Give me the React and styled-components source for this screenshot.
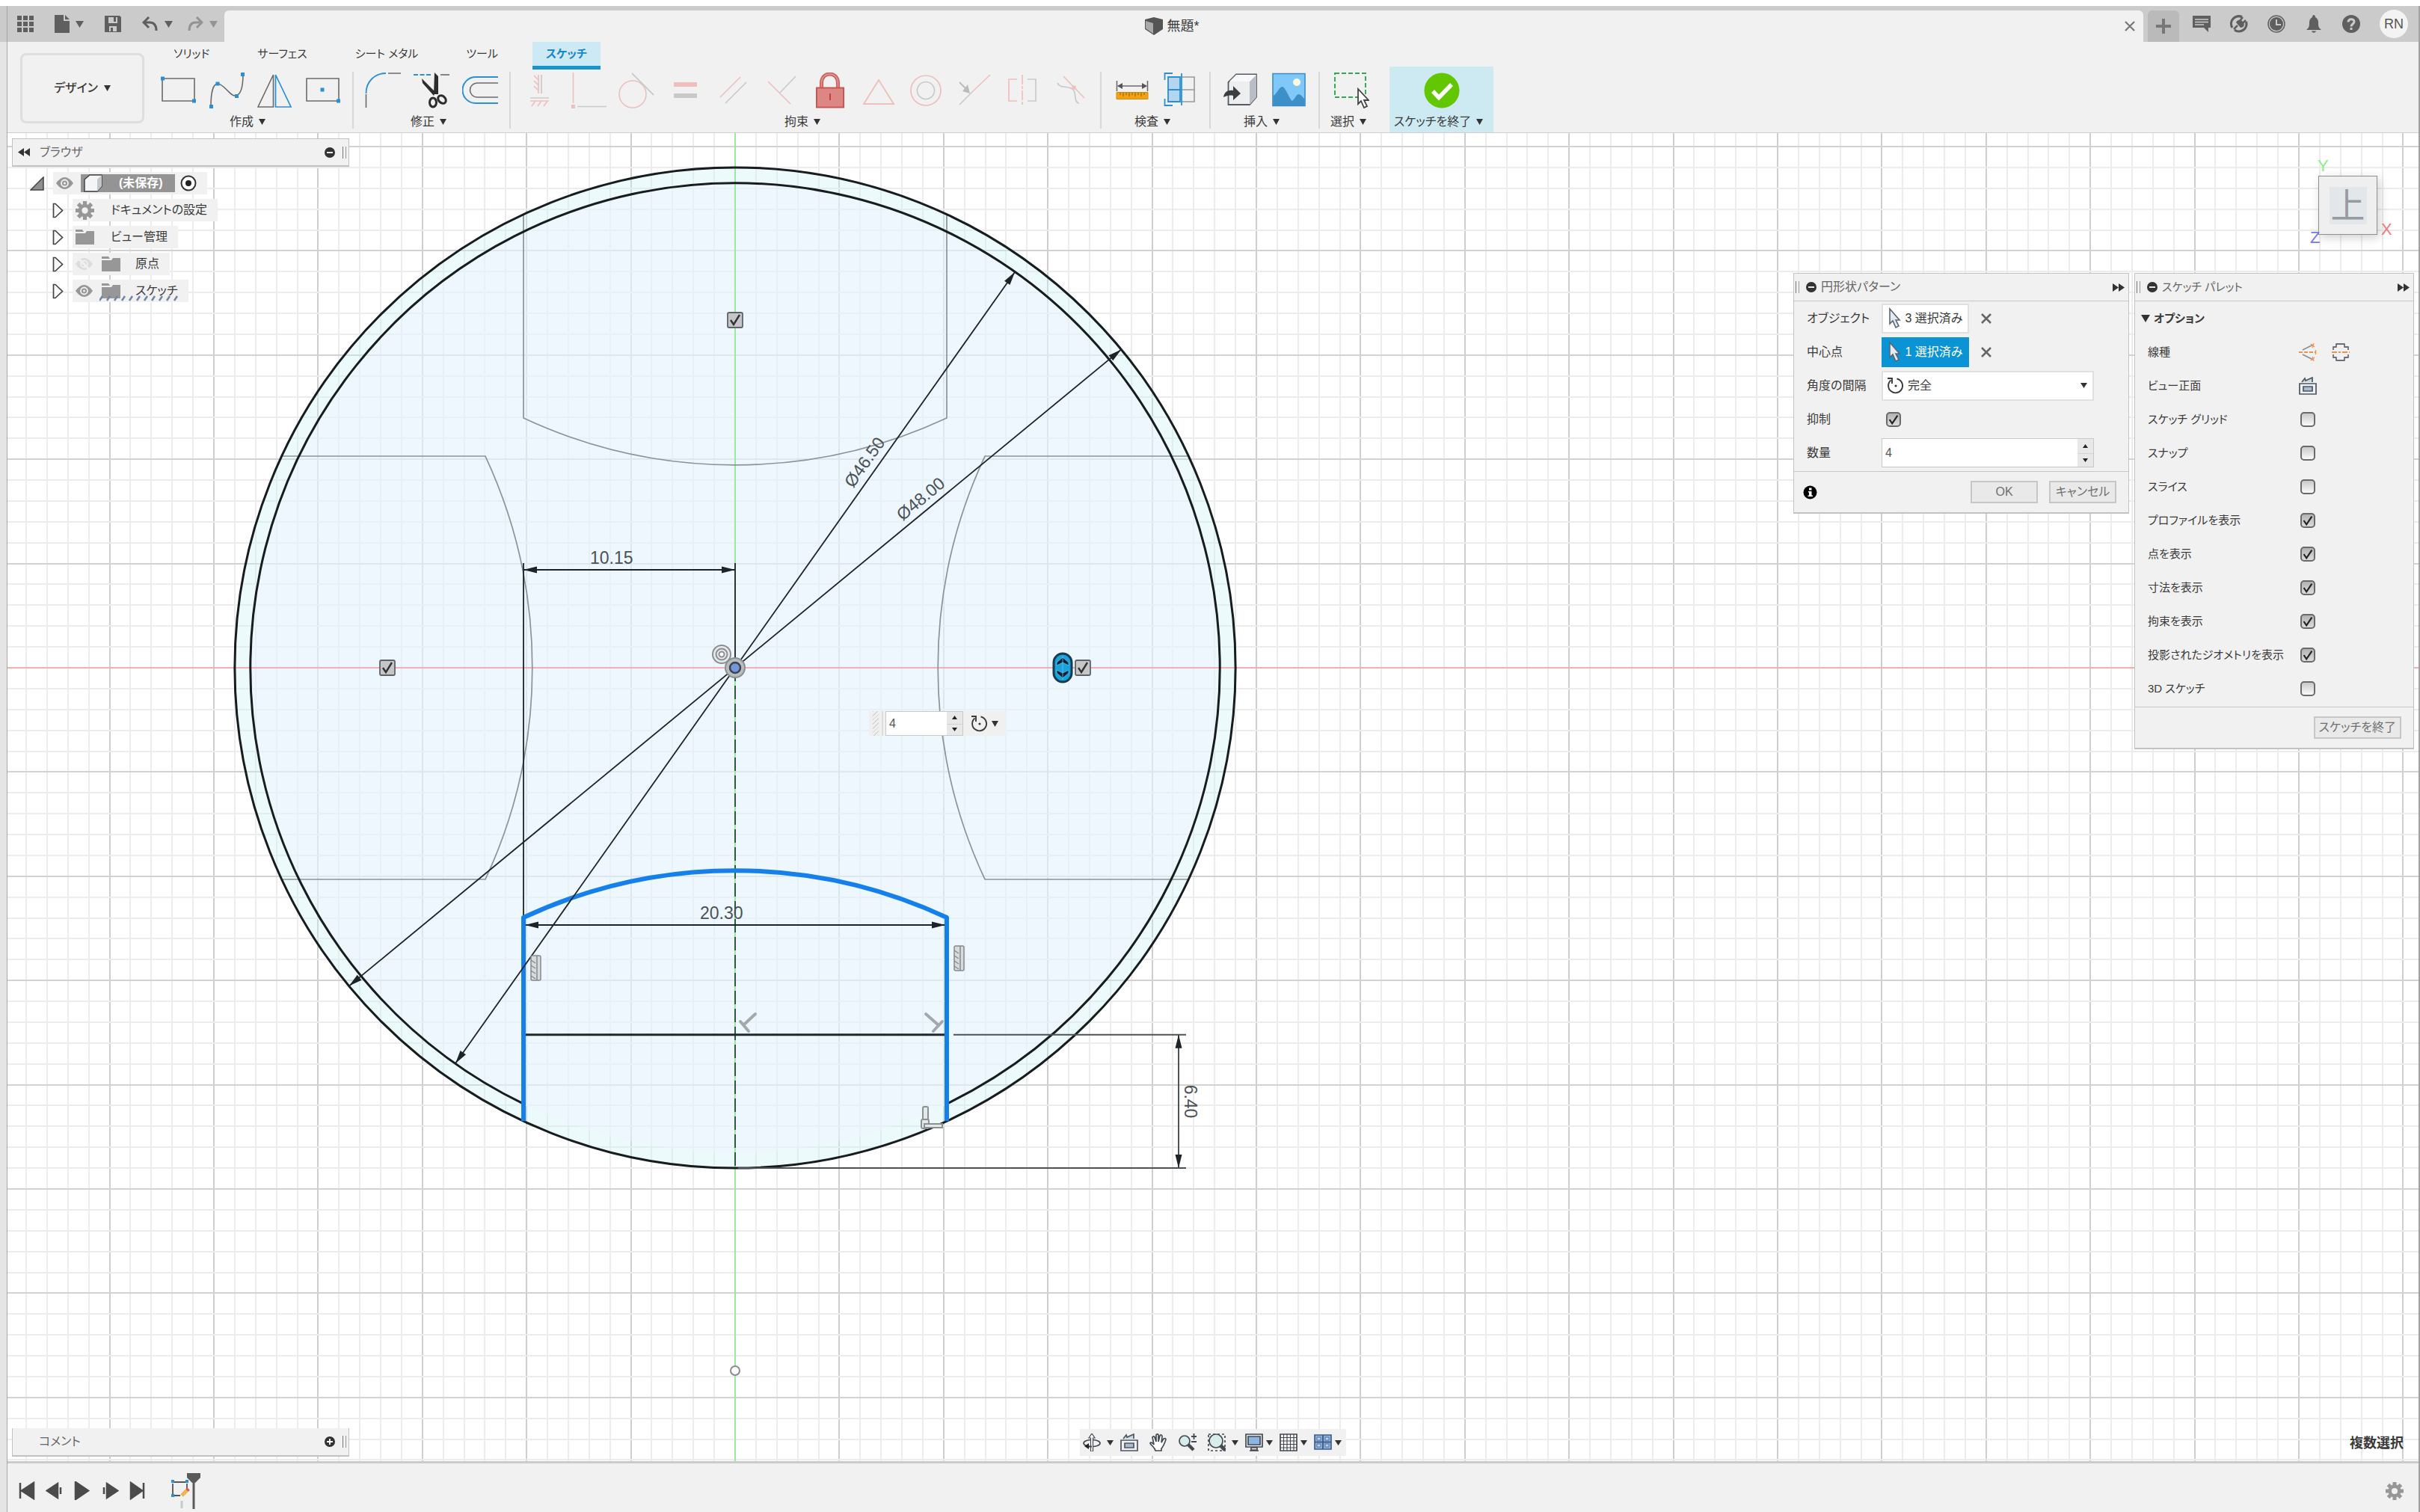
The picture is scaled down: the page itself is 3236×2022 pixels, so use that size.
import React, { useState } from "react";
import styled, { createGlobalStyle, css } from "styled-components";

const BLUE = "#2a8fd6";
const GREY = "#6b6b6b";
const PINK = "#eebfbd";
const PALE = "#c9caca";
const INK = "#3a3a3a";

const Global = createGlobalStyle`
  * { box-sizing: border-box; }
  body {
    margin: 0;
    background: #fff;
    color: #3a3a3a;
    font-family: "Liberation Sans", "Noto Sans CJK JP", sans-serif;
    font-size: 16px;
    line-height: 20px;
    font-feature-settings: "palt";
  }
  button, input, select { font: inherit; font-feature-settings: inherit; color: inherit; }
  button { background: none; border: 0; padding: 0; cursor: pointer; }
  svg { display: block; flex: none; }
`;

/* ---------- frame ---------- */

const Page = styled.div`
  min-height: 100vh;
  display: flex;
  flex-direction: column;
  padding-top: 8px;
`;

const Frame = styled.div`
  flex: 1;
  display: flex;
  padding-left: 9px;
  background: linear-gradient(#cbcbcb 48px, #e5e5e5 48px);
`;

const Window = styled.div`
  flex: 1;
  min-width: 0;
  display: flex;
  flex-direction: column;
  background: #f1f1f1;
  border-left: 1px solid #a6a6a6;
  border-right: 2px solid #a2a2a2;
`;

const TitleBar = styled.header`
  display: flex;
  height: 48px;
  background: #cbcbcb;
`;

const QuickAccess = styled.div`
  display: flex;
  align-items: center;
  gap: 28px;
  width: 290px;
  padding-left: 13px;
`;

const History = styled.div`
  display: flex;
  gap: 19px;
`;

const QuickButton = styled.button`
  display: flex;
  align-items: center;
  gap: 8px;
  color: ${(p) => (p.$dim ? "#939393" : "#5f5f5f")};
`;

const DocTab = styled.div`
  flex: 1;
  display: flex;
  align-items: center;
  margin-top: 6px;
  padding: 0 4px 0 0;
  background: #f1f1f1;
  border-radius: 6px 6px 0 0;
`;

const DocTitle = styled.div`
  flex: 1;
  display: flex;
  justify-content: center;
  align-items: center;
  gap: 4px;
  font-size: 18px;
`;

const CloseTab = styled.button`
  width: 28px;
  display: flex;
  justify-content: center;
`;

const AddTab = styled.button`
  width: 42px;
  margin: 6px 18px 0 6px;
  display: flex;
  align-items: center;
  justify-content: center;
  background: #bababa;
  border-radius: 6px 6px 0 0;
`;

const Account = styled.div`
  display: flex;
  align-items: center;
  gap: 26px;
  padding-right: 14px;
`;

const Avatar = styled.button`
  width: 38px;
  height: 38px;
  border-radius: 50%;
  background: #f3f3f3;
  font-size: 18px;
  color: #555;
`;

/* ---------- ribbon ---------- */

const Ribbon = styled.div`
  display: flex;
  height: 122px;
  border-bottom: 1px solid #cfcfcf;
`;

const Workspace = styled.button`
  display: flex;
  align-items: center;
  justify-content: center;
  gap: 8px;
  width: 166px;
  height: 94px;
  margin: 15px 5px 0 17px;
  border: 3px solid #dedede;
  border-radius: 8px;
  font-weight: 500;
`;

const RibbonMain = styled.div`
  flex: 1;
  display: flex;
  flex-direction: column;
`;

const Tabs = styled.div`
  display: flex;
  height: 33px;
  gap: 28px;
  padding-left: 16px;
`;

const Tab = styled.button`
  height: 37px;
  padding: 0 18px;
  font-size: 15px;
  border-bottom: 5px solid transparent;
  ${(p) =>
    p.$active &&
    css`
      background: #cdeaf4;
      border-bottom-color: #1c93c9;
      color: #1787c8;
      font-weight: 700;
    `}
`;

const Groups = styled.div`
  display: flex;
  flex: 1;
`;

const Group = styled.section`
  width: ${(p) => p.$width}px;
  padding: 8px 8px 0;
  position: relative;
  ${(p) =>
    p.$divided &&
    css`
      &::after {
        content: "";
        position: absolute;
        right: -1px;
        top: 7px;
        width: 2px;
        height: 76px;
        background: #d8d8d8;
      }
    `}
`;

const IconRow = styled.div`
  display: grid;
  grid-auto-flow: column;
  grid-auto-columns: 1fr;
  justify-items: center;
`;

const ToolButton = styled.button`
  width: 48px;
  height: 48px;
`;

const GroupLabel = styled.button`
  display: flex;
  align-items: center;
  justify-content: center;
  gap: 7px;
  width: 100%;
  height: 32px;
  padding: 4px 8px 0 0;
  white-space: nowrap;
`;

const FinishGroup = styled.section`
  width: 139px;
  margin-left: 8px;
  padding-top: 8px;
  background: #cdeaf3;
`;

/* ---------- canvas ---------- */

const Canvas = styled.main`
  flex: 1;
  position: relative;
  overflow: hidden;
  background: #fff;
`;

const Drawing = styled.svg`
  position: absolute;
  inset: 0;
  width: 100%;
  height: 100%;
  text { font-family: "Liberation Sans", Arial, sans-serif; font-size: 23px; fill: #4a5256; }
`;

const panelBox = css`
  position: absolute;
  background: #f1f1f1;
  border: 1px solid #c2c2c2;
  border-bottom-width: 2px;
`;

const SideBar = styled.div`
  ${panelBox}
  left: 6px;
  width: 451px;
  height: 38px;
  display: flex;
  align-items: center;
  padding-right: 3px;
  color: #666;
  ${(p) => (p.$bottom ? "bottom: 6px; border-top: 0;" : "top: 7px;")}
`;

const SideTitle = styled.span`
  flex: 1;
  display: flex;
  align-items: center;
  gap: 13px;
  padding-left: ${(p) => p.$indent}px;
`;

const Bars = styled.span`
  width: 5px;
  height: 16px;
  margin: ${(p) => p.$margin || "0 0 0 9px"};
  border-left: 1px solid #777;
  border-right: 1px solid #999;
`;

const Tree = styled.ul`
  position: absolute;
  top: 52px;
  left: 30px;
  margin: 0;
  padding: 0;
  list-style: none;
  display: grid;
  gap: 6px;
`;

const TreeRow = styled.li`
  display: flex;
  align-items: center;
  gap: 12px;
  height: 30px;
  padding-left: ${(p) => (p.$child ? 30 : 0)}px;
`;

const TreeItem = styled.button`
  position: relative;
  display: flex;
  align-items: center;
  gap: 12px;
  height: 30px;
  padding: 0 14px 0 4px;
  background: #f1f1f1;
`;

const TreeName = styled.span`
  padding-left: ${(p) => p.$pad || 0}px;
`;

const Selected = styled.span`
  display: flex;
  align-items: center;
  gap: 22px;
  height: 24px;
  padding: 0 16px 0 4px;
  margin: 0 -5px 0 -2px;
  background: #949494;
  color: #fff;
  font-weight: 700;
`;

const Hatch = styled.svg`
  position: absolute;
  left: 36px;
  bottom: 1px;
`;

const ViewCube = styled.div`
  position: absolute;
  top: 57px;
  right: 55px;
  width: 79px;
  height: 79px;
  display: grid;
  place-items: center;
  background: #efefef;
  border: 1px solid #8f8f8f;
  box-shadow: 3px 4px 12px rgba(0, 0, 0, 0.18);
`;

const CubeFace = styled.button`
  width: 50px;
  height: 50px;
  background: #e4e7ea;
  color: #969ba1;
  font-size: 46px;
  line-height: 50px;
`;

const Axis = styled.span`
  position: absolute;
  font-size: 22px;
  color: ${(p) => p.$color};
  left: ${(p) => p.$x}px;
  top: ${(p) => p.$y}px;
`;

const Panel = styled.section`
  ${panelBox}
  top: 187px;
  right: ${(p) => p.$right}px;
  width: ${(p) => p.$width}px;
`;

const PanelHead = styled.header`
  display: flex;
  align-items: center;
  height: 37px;
  border-bottom: 1px solid #c6c6c6;
  color: #666;
  padding: 0 5px 0 2px;
`;

const PanelTitle = styled.h2`
  flex: 1;
  margin: 0 0 0 5px;
  font-size: ${(p) => p.$size || 16}px;
  font-weight: 400;
`;

const Row = styled.div`
  display: grid;
  grid-template-columns: ${(p) => p.$cols};
  align-items: center;
  height: 45px;
  padding-left: 17px;
  font-size: ${(p) => (p.$small ? 15 : 16)}px;
  white-space: nowrap;
`;

const Pick = styled.button`
  display: flex;
  align-items: center;
  justify-content: center;
  gap: 6px;
  width: 117px;
  height: 40px;
  border: 2px solid ${(p) => (p.$on ? "#0a94d6" : "#e0e0e0")};
  background: ${(p) => (p.$on ? "#0a94d6" : "#fff")};
  color: ${(p) => (p.$on ? "#fff" : "#3a3a3a")};
`;

const Clear = styled.button`
  margin-left: 16px;
  width: 16px;
`;

const SelectBox = styled.div`
  display: grid;
  width: 284px;
  height: 40px;
  align-items: center;
  border: 2px solid #e0e0e0;
  background: #fff;
  & > * { grid-area: 1 / 1; }
  & > svg { pointer-events: none; margin-left: 5px; }
  & > svg:last-child { justify-self: end; margin-right: 7px; }
`;

const Select = styled.select`
  appearance: none;
  width: 100%;
  height: 100%;
  border: 0;
  padding-left: 33px;
  background: transparent;
`;

const Stepper = styled.div`
  display: flex;
  width: ${(p) => p.$width}px;
  height: ${(p) => p.$height}px;
  border: 1px solid #c9c9c9;
  background: #fff;
`;

const NumberInput = styled.input`
  flex: 1;
  min-width: 0;
  border: 0;
  padding: 0 4px;
  background: #fff;
  color: #555;
`;

const Steps = styled.div`
  display: grid;
  grid-template-rows: 1fr 1fr;
  width: 21px;
  background: #e8e8e8;
  button { display: grid; place-items: center; }
  button + button { border-top: 1px solid #d2d2d2; }
`;

const checkMark =
  "url(\"data:image/svg+xml,%3Csvg xmlns='http://www.w3.org/2000/svg' viewBox='0 0 20 20'%3E%3Cpath d='M4 10l4 6L16 4' fill='none' stroke='%23222' stroke-width='2.4'/%3E%3C/svg%3E\")";

const Check = styled.input.attrs({ type: "checkbox" })`
  appearance: none;
  width: 20px;
  height: 20px;
  margin: 0;
  border: 2px solid #6a6a6a;
  border-radius: 5px;
  background: linear-gradient(#c9c9c9, #fafafa);
  &:checked { background: ${checkMark} center / 18px no-repeat, linear-gradient(#b2b2b2, #dcdcdc); }
`;

const PanelFoot = styled.footer`
  display: flex;
  align-items: center;
  justify-content: flex-end;
  gap: 15px;
  height: 55px;
  margin-top: 2px;
  padding: 0 16px 0 12px;
  border-top: 1px solid #c6c6c6;
  & > svg { margin-right: auto; }
`;

const PushButton = styled.button`
  min-width: 90px;
  height: 30px;
  padding: 0 5px;
  border: 2px solid #c6c6c6;
  background: #e9e9e9;
  color: #6f6f6f;
  font-size: 16px;
  white-space: nowrap;
`;

const Section = styled.button`
  display: flex;
  align-items: center;
  gap: 5px;
  height: 45px;
  padding-left: 8px;
  font-size: 15px;
  font-weight: 700;
`;

const IconPair = styled.div`
  display: flex;
  gap: 20px;
`;

const MiniEditor = styled.div`
  position: absolute;
  left: 1152px;
  top: 773px;
  display: flex;
  align-items: center;
  width: 183px;
  height: 33px;
  background: #f0f0f0;
`;

const Grip = styled.span`
  width: 8px;
  height: 100%;
  margin: 0 4px 0 5px;
  background: repeating-linear-gradient(135deg, #d4d4d4 0 1px, transparent 1px 4px);
`;

const Rule = styled.span`
  width: 2px;
  height: 100%;
  margin-right: 3px;
  background: #dcdcdc;
`;

const OrbitMode = styled.button`
  display: flex;
  align-items: center;
  gap: 5px;
  margin-left: 10px;
`;

const NavBar = styled.nav`
  position: absolute;
  left: 1434px;
  bottom: 7px;
  display: flex;
  align-items: center;
  gap: 15px;
  height: 36px;
  padding: 0 12px 0 4px;
  background: #f1f1f1;
`;

const NavButton = styled.button`
  display: flex;
  align-items: center;
  gap: ${(p) => (p.$menu === "wide" ? 8 : 4)}px;
  margin-right: ${(p) => (p.$menu ? -6 : 0)}px;
`;

const Status = styled.div`
  position: absolute;
  right: 20px;
  bottom: 14px;
  font-size: 18px;
  font-weight: 700;
`;

const Timeline = styled.footer`
  display: flex;
  align-items: center;
  height: 68px;
  padding: 8px 20px 0 14px;
  border-top: 3px solid #cbcbcb;
  background: #f1f1f1;
`;

const Playback = styled.div`
  display: flex;
  gap: 13px;
`;

const Feature = styled.button`
  margin-left: 32px;
`;

const Settings = styled.button`
  margin-left: auto;
`;

/* ---------- small drawings ---------- */

const Caret = ({ w = 9, h = 8, up = false, fill = "#333" }) => (
  <svg width={w} height={h} viewBox="0 0 10 10" preserveAspectRatio="none" aria-hidden="true">
    <path d={up ? "M0 10h10L5 0z" : "M0 0h10L5 10z"} fill={fill} />
  </svg>
);

const Dot = ({ plus }) => (
  <svg width="16" height="16" viewBox="0 0 16 16" aria-hidden="true">
    <circle cx="8" cy="8" r="7" fill="#333" />
    <path d={plus ? "M4 8h8M8 4v8" : "M4 8h8"} stroke="#fff" strokeWidth="1.8" />
  </svg>
);

const Double = ({ left }) => (
  <svg width="16" height="11" viewBox="0 0 16 11" aria-hidden="true">
    <path d={left ? "M8 0v11L0 5.5zM16 0v11L8 5.5z" : "M0 0v11l8-5.5zM8 0v11l8-5.5z"} fill="#333" />
  </svg>
);

const Cross = ({ size = 14, color = "#666", w = 2.5 }) => (
  <svg width={size} height={size} viewBox="0 0 14 14" aria-hidden="true">
    <path d="M1 1l12 12M13 1L1 13" stroke={color} strokeWidth={w} />
  </svg>
);

const Pointer = () => (
  <svg width="17" height="30" viewBox="0 0 17 30" aria-hidden="true">
    <path d="M2 2v20l4-4 4 9 4-2-4-8h5z" fill="#e3eaf2" stroke="#5d6670" strokeWidth="1.6" />
  </svg>
);

const Turn = () => (
  <svg width="23" height="25" viewBox="0 0 23 25" fill="none" stroke={INK} aria-hidden="true">
    <path d="M5.500 5.500a9.500 9.500 0 1 0 8-2" strokeWidth="1.9" />
    <path d="M1 3h6v7" strokeWidth="1.9" />
    <circle cx="12" cy="13" r="1.600" fill={INK} stroke="none" />
  </svg>
);

const Eye = ({ off }) => (
  <svg width="23" height="18" viewBox="0 0 23 18" fill="none" aria-hidden="true">
    <path d="M0 9Q11.500-7 23 9 11.500 25 0 9z" fill={off ? "#dcdcdc" : "#979797"} />
    <circle cx="11.500" cy="9" r="4.500" stroke="#f1f1f1" strokeWidth="1.800" />
    <circle cx="11.500" cy="9" r="1.500" fill="#f1f1f1" />
    {off && <path d="M2 0l18 18" stroke="#f1f1f1" strokeWidth="3" />}
  </svg>
);

const Folder = () => (
  <svg width="25" height="20" viewBox="0 0 25 20" aria-hidden="true">
    <path d="M0 0h9l2 3H0zM0 5h13l2-3h10v18H0z" fill="#979797" />
  </svg>
);

const Gear = ({ size = 25 }) => (
  <svg width={size} height={size} viewBox="0 0 24 24" aria-hidden="true">
    <g stroke="#979797" strokeWidth="5">
      <path d="M12 0v24M0 12h24M3.500 3.500l17 17M20.500 3.500l-17 17" />
    </g>
    <circle cx="12" cy="12" r="8.500" fill="#979797" />
    <circle cx="12" cy="12" r="4" fill="#f1f1f1" />
  </svg>
);

const Arrow = () => (
  <svg width="15" height="21" viewBox="0 0 15 21" aria-hidden="true">
    <path d="M1.500 1.500V19.500H4L13.500 10.500 4 1.500z" fill="#fafafa" stroke="#444" strokeWidth="1.700" />
  </svg>
);

const ICONS = {
  rect: (
    <>
      <path d="M3 8h43v30H3z" stroke={GREY} strokeWidth="1.600" />
      <path d="M1 5.500h5v5H1zM43 35.500h5v5h-5z" fill={BLUE} />
    </>
  ),
  spline: (
    <>
      <path d="M3 45C3 27 6 15 12 15c9 0 17 18 25 16 6-2 9-13 9-29" stroke={GREY} strokeWidth="1.600" />
      <path d="M1 43h5v5H1zM9.500 12.500h5v5h-5zM35 29h5v5h-5zM43 0h5v5h-5z" fill={BLUE} />
    </>
  ),
  mirror: (
    <>
      <path d="M22.500 3v43H2z" stroke={GREY} strokeWidth="1.600" />
      <path d="M25.500 3v43H46z" stroke={BLUE} strokeWidth="1.700" />
    </>
  ),
  centerRect: (
    <>
      <path d="M2 8h43v30H2z" stroke={GREY} strokeWidth="1.600" />
      <path d="M20.500 20.500h5v5h-5zM42 35.500h5v5h-5z" fill={BLUE} />
    </>
  ),
  fillet: (
    <>
      <path d="M1.500 47V29M31 1h17" stroke={GREY} strokeWidth="1.600" />
      <path d="M1.500 28C1.500 12 13 1 28 1" stroke={BLUE} strokeWidth="1.800" />
    </>
  ),
  trim: (
    <>
      <path d="M0 3h24" stroke={BLUE} strokeWidth="1.800" strokeDasharray="6 2.500" />
      <path d="M36 3h12" stroke={GREY} strokeWidth="1.600" />
      <path d="M28 0l5 5v24h-6zM11 8l18 18-2 5-15-17z" fill="#2d2d2d" />
      <ellipse cx="26" cy="40" rx="4.500" ry="6" stroke="#2d2d2d" strokeWidth="3" />
      <ellipse cx="38" cy="36" rx="4.500" ry="6" stroke="#2d2d2d" strokeWidth="3" transform="rotate(-45 38 36)" />
    </>
  ),
  offset: (
    <>
      <path d="M48 6H18a17.500 17.500 0 0 0 0 35h30" stroke={BLUE} strokeWidth="2" />
      <path d="M48 14H20a9.500 9.500 0 0 0 0 19h28" stroke={GREY} strokeWidth="1.600" />
    </>
  ),
  hv: (
    <>
      <path d="M22 3v25M22 10l-6-6M22 17l-6-6M22 24l-6-6M11 38h25M18 38l-5 7M26 38l-5 7M34 38l-5 7" stroke={PINK} strokeWidth="1.700" />
      <path d="M26 3v25M11 34h25" stroke={PALE} strokeWidth="1.700" />
    </>
  ),
  coincident: (
    <>
      <path d="M3.500 0v41" stroke={PINK} strokeWidth="1.600" />
      <path d="M1 43h5v5H1z" fill={PINK} />
      <path d="M9 45.500h39" stroke={PALE} strokeWidth="1.700" />
    </>
  ),
  tangent: (
    <>
      <circle cx="19" cy="29" r="18" stroke={PINK} strokeWidth="1.600" />
      <path d="M18 1l29 29" stroke={PALE} strokeWidth="1.800" />
    </>
  ),
  equal: (
    <>
      <path d="M9 13h31v6H9z" fill={PINK} />
      <path d="M9 28h31v6H9z" fill={PALE} />
    </>
  ),
  parallel: (
    <>
      <path d="M7 33L34 6" stroke={PINK} strokeWidth="1.700" />
      <path d="M14 41l28-28" stroke={PALE} strokeWidth="1.700" />
    </>
  ),
  perpendicular: (
    <>
      <path d="M6 12l30 30" stroke={PINK} strokeWidth="1.700" />
      <path d="M22 27L43 5" stroke={PALE} strokeWidth="1.700" />
    </>
  ),
  lock: (
    <>
      <path d="M13.500 20v-6c0-16 22-16 22 0v6" stroke="#d0605d" strokeWidth="5" />
      <path d="M13.500 20v-6c0-16 22-16 22 0v6" stroke="#e59593" strokeWidth="1.500" />
      <path d="M7 20.500h36v26H7z" fill="#dd8785" stroke="#cc5552" strokeWidth="2" />
      <path d="M25 28v9" stroke="#c03a38" strokeWidth="1.800" />
    </>
  ),
  triangle: <path d="M25 10l20 32H5z" stroke={PINK} strokeWidth="1.900" />,
  concentric: (
    <>
      <circle cx="24" cy="24" r="20" stroke={PINK} strokeWidth="1.700" />
      <circle cx="24" cy="24" r="11.500" stroke={PALE} strokeWidth="1.700" />
    </>
  ),
  midpoint: (
    <>
      <path d="M4 43l18-18" stroke={PALE} strokeWidth="1.700" />
      <path d="M22 25L45 3" stroke={PINK} strokeWidth="1.700" />
      <path d="M4 13l8 8" stroke="#bbb" strokeWidth="2" />
      <path d="M18 28l-10-3 7-9z" fill="#bbb" />
    </>
  ),
  symmetry: (
    <>
      <path d="M17 9H6v29h11" stroke={PINK} strokeWidth="1.700" />
      <path d="M24 3v42" stroke={PINK} strokeWidth="1.600" strokeDasharray="13 2 4 2" />
      <path d="M31 9h11v29H31" stroke={PALE} strokeWidth="1.700" />
    </>
  ),
  curvature: (
    <>
      <path d="M14 5l28 29" stroke={PINK} strokeWidth="1.700" />
      <path d="M6 14c4 8 12 3 20 8 6 3 1 18 9 19" stroke={PALE} strokeWidth="1.700" />
      <path d="M25.500 17.500h5v5h-5z" fill={PINK} />
    </>
  ),
  measure: (
    <>
      <path d="M4.500 11v14M45.500 11v14M6 18h38" stroke={GREY} strokeWidth="1.600" />
      <path d="M5 18l7-4v8zM45 18l-7-4v8z" fill="#555" />
      <path d="M4 26.500h42v9H4z" fill="#f5a20f" stroke="#d18812" />
      <path d="M9 27v3M13 27v5M17 27v3M21 27v5M25 27v3M29 27v5M33 27v3M37 27v5M41 27v3" stroke="#8a5a10" />
    </>
  ),
  interference: (
    <>
      <path d="M8 6h16v33H8z" fill="#b3d6ee" stroke={BLUE} strokeWidth="1.800" />
      <path d="M26 6h17v33H26M26 23h17" stroke="#999" strokeWidth="1.600" />
      <path d="M8 23h17M26 1v43M14 1H3.500v9M14 44H3.500v-9" stroke={BLUE} strokeWidth="1.800" />
    </>
  ),
  insert: (
    <>
      <path d="M7.500 13L18 2.500h27V33L36 43H7.500z" fill="#eceef0" stroke="#555b63" strokeWidth="1.800" />
      <path d="M36 43V12L45 3v30z" fill="#b9bec6" />
      <path d="M36 12L45 3H18L9 12z" fill="#f8f8f9" />
      <path d="M1 33c1-7 6-10 13-9v-6l10 10-10 9v-6c-5-1-9 0-13 2z" fill="#3c3e42" />
    </>
  ),
  image: (
    <>
      <path d="M2 1.500h43v43H2z" fill="#7fc8f8" stroke="#3d8cc4" strokeWidth="1.600" />
      <path d="M2.500 31c5-2 8-12 12-12s9 14 13 19c3-1 6-9 9-9s5 4 8 6v9h-42z" fill="#3d8fc8" />
      <circle cx="34" cy="13" r="5" fill="#fefcdc" />
    </>
  ),
  select: (
    <>
      <path d="M2 1h41v32H2z" stroke="#2fa84f" strokeWidth="1.900" strokeDasharray="6 3" />
      <path d="M33 22v20l4-4 4 9 4-2-4-8h6z" fill="#fff" stroke="#444" strokeWidth="1.800" />
    </>
  ),
  finish: (
    <>
      <circle cx="24" cy="24" r="23.500" fill="#63c700" />
      <path d="M12 25l8 8.500L37 16" stroke="#fff" strokeWidth="5.500" />
    </>
  ),
};

const Icon = ({ name }) => (
  <svg width="48" height="48" viewBox="0 0 48 48" fill="none" aria-hidden="true">
    {ICONS[name]}
  </svg>
);

const GROUPS = [
  { label: "作成", width: 274, icons: ["rect", "spline", "mirror", "centerRect"] },
  { label: "修正", width: 210, icons: ["fillet", "trim", "offset"] },
  {
    label: "拘束",
    width: 790,
    icons: ["hv", "coincident", "tangent", "equal", "parallel", "perpendicular", "lock", "triangle", "concentric", "midpoint", "symmetry", "curvature"],
  },
  { label: "検査", width: 146, icons: ["measure", "interference"] },
  { label: "挿入", width: 146, icons: ["insert", "image"] },
  { label: "選択", width: 86, icons: ["select"], last: true },
];

const TABS = ["ソリッド", "サーフェス", "シート メタル", "ツール", "スケッチ"];

/* ---------- sketch geometry, in pixels round the origin ---------- */

const UNIT = 27.88;
const OUTER = 24 * UNIT;
const INNER = 23.25 * UNIT;
const HALF = 10.15 * UNIT;
const BASE = 17.6 * UNIT;
const SHOULDER = 334;
const OUTER_Y = Math.sqrt(OUTER * OUTER - HALF * HALF);
const INNER_Y = Math.sqrt(INNER * INNER - HALF * HALF);
const PROFILE = `M${-HALF} ${OUTER_Y}V${SHOULDER}A${OUTER} ${OUTER} 0 0 1 ${HALF} ${SHOULDER}V${OUTER_Y}`;
const range = (a, b) => Array.from({ length: b - a + 1 }, (_, i) => a + i);

const Head = ({ x, y, angle }) => (
  <path d="M0 0L-18 4.500V-4.500z" fill="#1d2326" transform={`translate(${x} ${y}) rotate(${angle})`} />
);

const Diameter = ({ r, angle, label, at, turn }) => {
  const a = (angle * Math.PI) / 180;
  const x = Math.cos(a) * r;
  const y = Math.sin(a) * r;
  return (
    <g>
      <path d={`M${-x} ${-y}L${x} ${y}`} stroke="#1d2326" strokeWidth="1.800" />
      <Head x={x} y={y} angle={angle} />
      <Head x={-x} y={-y} angle={angle + 180} />
      <text textAnchor="middle" dominantBaseline="central" transform={`translate(${at}) rotate(${turn})`}>
        {label}
      </text>
    </g>
  );
};

const Mark = ({ x, y }) => (
  <g transform={`translate(${x} ${y})`} fill="none">
    <rect x="-10" y="-10" width="20" height="20" rx="2" fill="#c4c6c7" stroke="#5f6365" strokeWidth="1.800" />
    <path d="M-6 0l4 6L6-7" stroke="#333" strokeWidth="2.400" />
  </g>
);

const Ruler = ({ x, y }) => (
  <g transform={`translate(${x} ${y})`} fill="#d7dbdc" stroke="#868b8d" strokeWidth="1.500">
    <rect x="-6" y="-16" width="13" height="33" rx="2" />
    <path d="M-6-10l6 4M-6-3l6 4M-6 4l6 4M-6 11l6 4M2-16V17" />
  </g>
);

const Sketch = () => (
  <Drawing fill="none" aria-label="sketch">
    <g transform="translate(973 715)">
      {range(-35, 82).map((i) => (
        <path key={`v${i}`} d={`M${Math.round(i * UNIT)} -800V1300`} stroke={i % 5 ? "#ececec" : "#cecece"} strokeWidth="2" />
      ))}
      {range(-26, 45).map((i) => (
        <path key={`h${i}`} d={`M-1000 ${Math.round(i * UNIT)}H2300`} stroke={i % 5 ? "#ececec" : "#d2d2d2"} strokeWidth="2" />
      ))}
      <circle r={OUTER} fill="rgba(205,240,244,0.36)" />
      <circle r={INNER} fill="rgba(238,245,255,0.45)" />
      <path d="M-1000 0H2300" stroke="#f3aeb0" strokeWidth="2" />
      <path d="M0-800V1300" stroke="#93ef97" strokeWidth="2" />

      {[90, 180, 270].map((turn) => (
        <path key={turn} d={PROFILE} transform={`rotate(${turn})`} stroke="#8d9396" strokeWidth="1.700" />
      ))}

      <circle r={OUTER} stroke="#171c1e" strokeWidth="3" />
      <path d={`M${-HALF} ${INNER_Y}A${INNER} ${INNER} 0 1 1 ${HALF} ${INNER_Y}`} stroke="#171c1e" strokeWidth="3" />
      <path d={`M0 0V${OUTER}`} stroke="#2d5a3a" strokeWidth="2" strokeDasharray="18 6" />
      <path d={`M${-HALF} ${BASE}H${HALF}`} stroke="#22282a" strokeWidth="3" />

      <g stroke="#1d2326" strokeWidth="1.800">
        <path d={`M${-HALF}-140V${SHOULDER}M0-140V0M${-HALF}-131H0`} />
        <path d={`M${-HALF} 344H${HALF}`} />
        <path d={`M${HALF + 9} ${BASE}H603M4 ${OUTER}H603M593 ${BASE}V${OUTER}`} stroke="#4d5355" strokeWidth="2" />
      </g>
      <Head x={-HALF} y={-131} angle={180} />
      <Head x={0} y={-131} angle={0} />
      <path d={PROFILE} stroke="#1580ec" strokeWidth="6" strokeLinejoin="round" />
      <Head x={-HALF + 2} y={344} angle={180} />
      <Head x={HALF - 2} y={344} angle={0} />
      <Head x={593} y={BASE} angle={-90} />
      <Head x={593} y={OUTER} angle={90} />
      <Diameter r={INNER} angle={-54.75} label="Ø46.50" at="173 -275" turn={-54.75} />
      <Diameter r={OUTER} angle={-39.5} label="Ø48.00" at="248 -226" turn={-39.5} />
      <text x="-194" y="-139">10.15</text>
      <text x="-47" y="336">20.30</text>
      <text textAnchor="middle" dominantBaseline="central" transform="translate(609 580) rotate(90)">6.40</text>

      <Mark x={0} y={-465} />
      <Mark x={-465} y={0} />
      <Mark x={465} y={0} />
      <rect x="426" y="-19" width="24" height="38" rx="12" fill="#1ba1dc" stroke="#163c50" strokeWidth="3" />
      <path d="M438-16V16M430-7l8-7 8 7v4l-8-4-8 4zM430 7l8 7 8-7V3l-8 4-8-4z" fill="#123" stroke="#5cc6f0" strokeWidth="0.800" />

      <g stroke="#8b8f91" strokeWidth="2">
        <circle cx="-18" cy="-18" r="12" fill="#e6ebec" />
        <circle cx="-18" cy="-18" r="7.500" fill="#e6ebec" />
        <circle cx="-18" cy="-18" r="3.500" fill="#fff" />
        <circle r="13" fill="#b8bcbd" />
      </g>
      <circle r="7" fill="#7397d8" stroke="#3b4450" strokeWidth="2.500" />
      <circle cx="0" cy="940" r="6" fill="#fff" stroke="#8b8b8b" strokeWidth="2" />

      <Ruler x={-267} y={401} />
      <Ruler x={299} y={388} />
      <g stroke="#a3a9ab" strokeWidth="4" strokeLinecap="round">
        <path d="M27 463L11 478M7 473l11 13" />
        <path d="M255 463l17 15M277 473l-12 13" />
      </g>
      <g stroke="#8b9093" strokeWidth="2" fill="#e3e8e9">
        <rect x="251" y="587" width="7" height="20" rx="2" />
        <rect x="249" y="604" width="10" height="12" rx="2" />
        <rect x="253" y="610" width="24" height="5" />
      </g>
    </g>
  </Drawing>
);

/* ---------- panels ---------- */

const Spinner = () => (
  <Steps>
    <button aria-label="増やす"><Caret w={7} h={5} up fill="#222" /></button>
    <button aria-label="減らす"><Caret w={7} h={5} fill="#222" /></button>
  </Steps>
);

const PatternPanel = () => (
  <Panel $right={387} $width={449}>
    <PanelHead>
      <Bars $margin="0 8px 0 0" />
      <Dot />
      <PanelTitle>円形状パターン</PanelTitle>
      <Double />
    </PanelHead>
    <Row $cols="100px 117px 1fr">
      <span>オブジェクト</span>
      <Pick><Pointer />3 選択済み</Pick>
      <Clear aria-label="クリア"><Cross /></Clear>
    </Row>
    <Row $cols="100px 117px 1fr">
      <span>中心点</span>
      <Pick $on><Pointer />1 選択済み</Pick>
      <Clear aria-label="クリア"><Cross /></Clear>
    </Row>
    <Row $cols="100px 1fr">
      <label htmlFor="spacing">角度の間隔</label>
      <SelectBox>
        <Select id="spacing" defaultValue="full"><option value="full">完全</option></Select>
        <Turn />
        <Caret w={9} h={7} />
      </SelectBox>
    </Row>
    <Row $cols="106px 1fr">
      <label htmlFor="suppress">抑制</label>
      <Check id="suppress" defaultChecked />
    </Row>
    <Row $cols="100px 1fr">
      <label htmlFor="quantity">数量</label>
      <Stepper $width={284} $height={39}>
        <NumberInput id="quantity" inputMode="numeric" defaultValue="4" />
        <Spinner />
      </Stepper>
    </Row>
    <PanelFoot>
      <svg width="19" height="19" viewBox="0 0 19 19" aria-hidden="true">
        <circle cx="9.500" cy="9.500" r="9" fill="#000" />
        <path d="M8 3.500h3.500v3H8zM7 8h4.500v5.500H13V15H6.500v-1.500H8V9.500H7z" fill="#fff" />
      </svg>
      <PushButton>OK</PushButton>
      <PushButton>キャンセル</PushButton>
    </PanelFoot>
  </Panel>
);

const LookAt = () => (
  <svg width="24" height="24" viewBox="0 0 24 24" fill="none" stroke="#4e5560" strokeWidth="1.700" aria-hidden="true">
    <path d="M1 9h22v14H1z" fill="#eef1f4" />
    <path d="M6 13h12v6H6z" fill="#a9bccf" />
    <path d="M4 7l4-5 1 3 9-4v6" fill="#cdd8e4" />
  </svg>
);

const OPTIONS = [
  ["スケッチ グリッド", false],
  ["スナップ", false],
  ["スライス", false],
  ["プロファイルを表示", true],
  ["点を表示", true],
  ["寸法を表示", true],
  ["拘束を表示", true],
  ["投影されたジオメトリを表示", true],
  ["3D スケッチ", false],
];

const Palette = () => {
  const [values, setValues] = useState(OPTIONS.map((o) => o[1]));
  return (
    <Panel $right={6} $width={374}>
      <PanelHead>
        <Bars $margin="0 8px 0 0" />
        <Dot />
        <PanelTitle $size={15}>スケッチ パレット</PanelTitle>
        <Double />
      </PanelHead>
      <Section><Caret w={12} h={10} />オプション</Section>
      <Row $small $cols="202px 1fr">
        <span>線種</span>
        <IconPair>
          <button aria-label="コンストラクション">
            <svg width="24" height="24" viewBox="0 0 24 24" fill="none" strokeWidth="1.800" aria-hidden="true">
              <path d="M5 9L19 2M5 15l14 7" stroke="#8b8f93" />
              <path d="M0 12h22" stroke="#f0924b" strokeDasharray="5 2" />
              <path d="M16 1l5 4M20 0l-2 6M16 23l5-4M20 24l-2-6M22.500 9v6" stroke="#f0924b" strokeWidth="1.300" />
            </svg>
          </button>
          <button aria-label="中心線">
            <svg width="24" height="24" viewBox="0 0 24 24" fill="none" strokeWidth="1.800" aria-hidden="true">
              <path d="M2 9V5h4V1h11v4h5v4M2 15v4h4v4h11v-4h5v-4" stroke="#6b7076" strokeLinejoin="round" />
              <path d="M0 12h24" stroke="#f0924b" strokeDasharray="7 2 3 2" />
            </svg>
          </button>
        </IconPair>
      </Row>
      <Row $small $cols="202px 1fr">
        <span>ビュー正面</span>
        <button aria-label="ビュー正面"><LookAt /></button>
      </Row>
      {OPTIONS.map(([name], i) => (
        <Row $small key={name} $cols="204px 1fr">
          <label htmlFor={`option-${i}`}>{name}</label>
          <Check
            id={`option-${i}`}
            checked={values[i]}
            onChange={() => setValues(values.map((v, j) => (j === i ? !v : v)))}
          />
        </Row>
      ))}
      <PanelFoot>
        <PushButton>スケッチを終了</PushButton>
      </PanelFoot>
    </Panel>
  );
};

const Browser = () => (
  <Tree>
    <TreeRow>
      <svg width="19" height="19" viewBox="0 0 19 19" aria-hidden="true"><path d="M18 1v17H1z" fill="#8f8f8f" stroke="#444" strokeWidth="1.500" /></svg>
      <TreeItem>
        <Eye />
        <Selected>
          <svg width="25" height="24" viewBox="0 0 25 24" fill="#f4f5f7" stroke="#444" strokeWidth="1.500" aria-hidden="true">
            <path d="M1 7l7-6h16v15l-6 7H1z" /><path d="M18 7l6-6v15l-6 7z" fill="#c3c7ce" stroke="none" />
          </svg>
          (未保存)
        </Selected>
        <svg width="22" height="22" viewBox="0 0 22 22" fill="none" aria-hidden="true">
          <circle cx="11" cy="11" r="9.500" stroke="#333" strokeWidth="2" fill="#fff" /><circle cx="11" cy="11" r="4" fill="#222" />
        </svg>
      </TreeItem>
    </TreeRow>
    <TreeRow $child>
      <Arrow />
      <TreeItem><Gear /><TreeName $pad={10}>ドキュメントの設定</TreeName></TreeItem>
    </TreeRow>
    <TreeRow $child>
      <Arrow />
      <TreeItem><Folder /><TreeName $pad={10}>ビュー管理</TreeName></TreeItem>
    </TreeRow>
    <TreeRow $child>
      <Arrow />
      <TreeItem><Eye off /><Folder /><TreeName $pad={8}>原点</TreeName></TreeItem>
    </TreeRow>
    <TreeRow $child>
      <Arrow />
      <TreeItem>
        <Eye /><Folder /><TreeName $pad={8}>スケッチ</TreeName>
        <Hatch width="106" height="8" aria-hidden="true">
          <path d={range(0, 10).map((i) => `M${i * 10} 7l4-6`).join("")} stroke="#6f87a3" strokeWidth="2.500" />
        </Hatch>
      </TreeItem>
    </TreeRow>
  </Tree>
);

const NAV = [
  ["オービット", "wide", <g key="a"><ellipse cx="12" cy="13" rx="11" ry="4.500" /><path d="M10.500 24V6H8l4-6 4 6h-2.500v18z" fill="#fff" strokeWidth="1.200" /><path d="M12 17.500H5" strokeWidth="2" /><path d="M2 17l6-4v8z" fill="#222" stroke="none" /></g>],
  ["ビュー正面", null, null],
  ["画面移動", null, <path key="c" d="M8 23c-1-5-6-7-7-10 1-2 4 0 5 2L4 5c1-2 3-1 3 0l2 6V2c1-2 3-1 3 0v9l2-8c1-2 3-1 3 1l-1 8 3-5c2-1 3 0 3 1-2 6-3 9-6 12v3z" fill="#fff" />],
  ["ズーム", null, <g key="d"><circle cx="8" cy="10" r="7" fill="#d8ecec" /><path d="M13 15l7 7" strokeWidth="4.500" /><path d="M17 4h7M20.500 0v8M17 11h7" strokeWidth="1.800" /></g>],
  ["フィット", "wide", <g key="e"><path d="M1 1h22v22H1z" strokeDasharray="3 3" /><circle cx="11" cy="10" r="9" fill="#d8ecec" /><path d="M17 16l6 6" strokeWidth="5" /></g>],
  ["表示設定", "tight", <g key="f"><path d="M1 1h22v17H1z" fill="#e6e8ea" /><path d="M4 4h16v11H4z" fill="#8db5e2" /><path d="M8 19h8v3H8zM6 23h12" fill="#fff" /></g>],
  ["グリッド", "tight", <g key="g"><path d="M1 1h22v22H1z" fill="#fff" /><path d="M5.500 1v22M10 1v22M14.500 1v22M19 1v22M1 5.500h22M1 10h22M1 14.500h22M1 19h22" strokeWidth="1.200" /></g>],
  ["ビューポート", "tight", <g key="h" fill="#8fb2dc" stroke="#3f5f8f"><path d="M1 2h22v19H1z" /><path d="M12 2v19M1 11.500h22" strokeWidth="2" /><path d="M4 5h5v4H4zM15 5h5v4h-5zM4 14h5v4H4zM15 14h5v4h-5z" fill="#b9d0ec" strokeWidth="0.800" /></g>],
];

const Navigation = () => (
  <NavBar>
    {NAV.map(([name, menu, art]) => (
      <NavButton key={name} $menu={menu} aria-label={name}>
        {art ? (
          <svg width="24" height="24" viewBox="0 0 24 24" fill="none" stroke="#444a52" strokeWidth="1.700" aria-hidden="true">{art}</svg>
        ) : (
          <LookAt />
        )}
        {menu && <Caret w={9} h={7} />}
      </NavButton>
    ))}
  </NavBar>
);

const PLAY = [
  ["先頭", "M2 2v21M20 2v21L4 12.500z"],
  ["前へ", "M15 3v19L1 12.500zM19 8v9"],
  ["再生", "M2 1v23l17-11.500z"],
  ["次へ", "M7 3v19l14-9.500zM3 8v9"],
  ["末尾", "M2 2v21l15-10.500zM19 2v21"],
];

export default function App() {
  const [tab, setTab] = useState("スケッチ");
  return (
    <>
      <Global />
      <Page>
        <Frame>
          <Window>
            <TitleBar>
              <QuickAccess>
                <QuickButton aria-label="データ パネル">
                  <svg width="22" height="22" viewBox="0 0 22 22" fill="currentColor" aria-hidden="true">
                    <path d="M0 0h6v6H0zM8 0h6v6H8zM16 0h6v6h-6zM0 8h6v6H0zM8 8h6v6H8zM16 8h6v6h-6zM0 16h6v6H0zM8 16h6v6H8zM16 16h6v6h-6z" />
                  </svg>
                </QuickButton>
                <QuickButton aria-label="ファイル">
                  <svg width="20" height="24" viewBox="0 0 20 24" fill="currentColor" aria-hidden="true"><path d="M0 0h12v8h8v16H0zM14 0l6 6h-6z" /></svg>
                  <Caret w={11} h={9} fill="#5f5f5f" />
                </QuickButton>
                <QuickButton aria-label="保存">
                  <svg width="22" height="22" viewBox="0 0 22 22" aria-hidden="true">
                    <path d="M0 0h20l2 2v20H0z" fill="currentColor" /><path d="M5 2h12v8H5zM6 14h10v7H6z" fill="#cbcbcb" /><path d="M12 2h3v6h-3zM8 16h3v6H8z" fill="currentColor" />
                  </svg>
                </QuickButton>
                <History>
                  <QuickButton aria-label="元に戻す">
                    <svg width="22" height="20" viewBox="0 0 22 20" fill="none" stroke="currentColor" strokeWidth="3" aria-hidden="true"><path d="M9 1L2 8l7 7M2 8h8c6 0 9 4 9 11" /></svg>
                    <Caret w={11} h={9} fill="#5f5f5f" />
                  </QuickButton>
                  <QuickButton $dim aria-label="やり直し">
                    <svg width="22" height="20" viewBox="0 0 22 20" fill="none" stroke="currentColor" strokeWidth="3" aria-hidden="true"><path d="M13 1l7 7-7 7M20 8h-8c-6 0-9 4-9 11" /></svg>
                    <Caret w={11} h={9} fill="#939393" />
                  </QuickButton>
                </History>
              </QuickAccess>
              <DocTab>
                <DocTitle>
                  <svg width="26" height="24" viewBox="0 0 26 24" aria-hidden="true">
                    <path d="M1 3l12-3 12 3v13l-12 8-12-8z" fill="#555" /><path d="M2 5l10 3v14L2 15z" fill="#a9a9a9" />
                  </svg>
                  <span>無題*</span>
                </DocTitle>
                <CloseTab aria-label="閉じる"><Cross size={14} color="#777" w={2.2} /></CloseTab>
              </DocTab>
              <AddTab aria-label="新規">
                <svg width="20" height="20" viewBox="0 0 20 20" aria-hidden="true"><path d="M10 0v20M0 10h20" stroke="#777" strokeWidth="4" /></svg>
              </AddTab>
              <Account>
                <QuickButton aria-label="コメント">
                  <svg width="24" height="24" viewBox="0 0 24 24" aria-hidden="true"><path d="M0 1h24v16h-3v6l-6-6H0z" fill="currentColor" /><path d="M3 6h18M3 9.500h18M3 13h12" stroke="#cbcbcb" strokeWidth="1.500" /></svg>
                </QuickButton>
                <QuickButton aria-label="拡張機能">
                  <svg width="24" height="24" viewBox="0 0 24 24" fill="none" aria-hidden="true">
                    <path d="M16 2.800A10 10 0 0 0 3 17M6 20a10 10 0 0 0 15.500-11" stroke="currentColor" strokeWidth="3.200" />
                    <path d="M8 10l6 7c4 0 6-3 4-7l-3-3c-3-1-6 0-7 3z" fill="currentColor" />
                    <path d="M13 8l4-5M17 11l4-4M10 14l-5 5" stroke="currentColor" strokeWidth="2.500" />
                  </svg>
                </QuickButton>
                <QuickButton aria-label="ジョブ ステータス">
                  <svg width="24" height="24" viewBox="0 0 24 24" fill="none" aria-hidden="true"><circle cx="12" cy="12" r="11" stroke="currentColor" strokeWidth="1.500" /><circle cx="12" cy="12" r="9" fill="currentColor" /><path d="M12 6v7h6" stroke="#cbcbcb" strokeWidth="2" /></svg>
                </QuickButton>
                <QuickButton aria-label="通知">
                  <svg width="24" height="24" viewBox="0 0 24 24" aria-hidden="true"><path d="M2 20c4-3 4-6 4-10 0-4 2-6 4-7 0-4 4-4 4 0 2 1 4 3 4 7s0 7 4 10zM9 21.500h6c-1 3-5 3-6 0z" fill="currentColor" /></svg>
                </QuickButton>
                <QuickButton aria-label="ヘルプ">
                  <svg width="24" height="24" viewBox="0 0 24 24" fill="none" aria-hidden="true"><circle cx="12" cy="12" r="12" fill="currentColor" /><path d="M8 9.500c0-5 8-5 8-.5 0 3-4 3-4 6.500M12 17v3" stroke="#cbcbcb" strokeWidth="3" /></svg>
                </QuickButton>
                <Avatar>RN</Avatar>
              </Account>
            </TitleBar>

            <Ribbon>
              <Workspace>デザイン<Caret /></Workspace>
              <RibbonMain>
                <Tabs>
                  {TABS.map((name) => (
                    <Tab key={name} $active={name === tab} onClick={() => setTab(name)}>{name}</Tab>
                  ))}
                </Tabs>
                <Groups>
                  {GROUPS.map((g) => (
                    <Group key={g.label} $width={g.width} $divided={!g.last}>
                      <IconRow>
                        {g.icons.map((name) => (
                          <ToolButton key={name} aria-label={name}><Icon name={name} /></ToolButton>
                        ))}
                      </IconRow>
                      <GroupLabel>{g.label}<Caret /></GroupLabel>
                    </Group>
                  ))}
                  <FinishGroup>
                    <IconRow><ToolButton aria-label="終了"><Icon name="finish" /></ToolButton></IconRow>
                    <GroupLabel>スケッチを終了<Caret /></GroupLabel>
                  </FinishGroup>
                </Groups>
              </RibbonMain>
            </Ribbon>

            <Canvas>
              <Sketch />
              <SideBar>
                <SideTitle $indent={7}><Double left />ブラウザ</SideTitle>
                <Dot />
                <Bars />
              </SideBar>
              <Browser />
              <ViewCube>
                <Axis $color="#86f086" $x={-2} $y={-24}>Y</Axis>
                <Axis $color="#7676ee" $x={-12} $y={72}>Z</Axis>
                <Axis $color="#f47a7a" $x={83} $y={61}>X</Axis>
                <CubeFace>上</CubeFace>
              </ViewCube>
              <PatternPanel />
              <Palette />
              <MiniEditor>
                <Grip />
                <Rule />
                <Stepper $width={104} $height={33}>
                  <NumberInput aria-label="数量" inputMode="numeric" defaultValue="4" />
                  <Spinner />
                </Stepper>
                <OrbitMode aria-label="角度の間隔"><Turn /><Caret w={9} h={8} /></OrbitMode>
              </MiniEditor>
              <SideBar $bottom>
                <SideTitle $indent={35}>コメント</SideTitle>
                <Dot plus />
                <Bars />
              </SideBar>
              <Navigation />
              <Status>複数選択</Status>
            </Canvas>

            <Timeline>
              <Playback>
                {PLAY.map(([name, d]) => (
                  <button key={name} aria-label={name}>
                    <svg width="24" height="25" viewBox="0 0 22 25" fill="#4b4b4b" stroke="#4b4b4b" strokeWidth="2.500" aria-hidden="true"><path d={d} /></svg>
                  </button>
                ))}
              </Playback>
              <Feature aria-label="スケッチ1">
                <svg width="42" height="50" viewBox="0 0 42 50" fill="none" aria-hidden="true">
                  <path d="M5 13h19M3 15v15M22 15v9M5 31h8" stroke="#555" strokeWidth="1.800" />
                  <path d="M1 10h4v4H1zM20 10h4v4h-4zM1 29h4v4H1z" fill={BLUE} />
                  <path d="M15 31l7-7" stroke="#f2b445" strokeWidth="5" />
                  <path d="M22 24l2-2" stroke="#dc5050" strokeWidth="5" />
                  <path d="M15 38v10" stroke="#c9c9c9" strokeWidth="3" />
                  <path d="M22 1h18v6l-7 7h-4l-7-7z" fill="#5a5a5a" />
                  <path d="M31 12v37" stroke="#5a5a5a" strokeWidth="3" />
                </svg>
              </Feature>
              <Settings aria-label="設定"><Gear size={24} /></Settings>
            </Timeline>
          </Window>
        </Frame>
      </Page>
    </>
  );
}
